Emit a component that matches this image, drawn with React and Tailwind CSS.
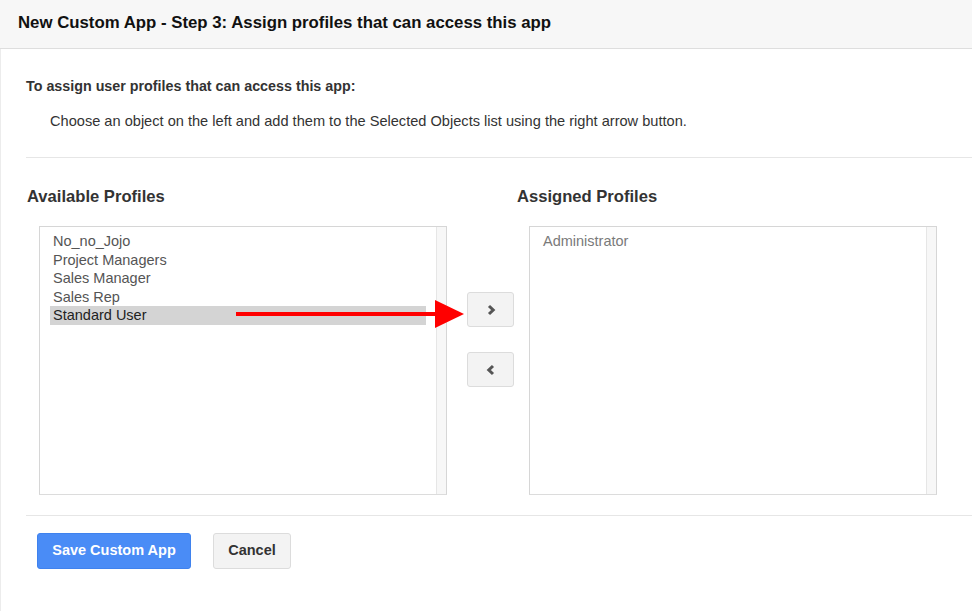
import React from "react";

const available = ["No_no_Jojo", "Project Managers", "Sales Manager", "Sales Rep", "Standard User"];
const assigned = ["Administrator"];

function Chevron({ dir }) {
  return (
    <svg width="10" height="12" viewBox="0 0 10 12">
      {dir === "right" ? (
        <path d="M3 2 L7.2 6 L3 10" fill="none" stroke="#555" strokeWidth="3" strokeLinejoin="miter" />
      ) : (
        <path d="M7 2 L2.8 6 L7 10" fill="none" stroke="#555" strokeWidth="3" strokeLinejoin="miter" />
      )}
    </svg>
  );
}

function ListBox({ items, selected, muted }) {
  return (
    <div className="ml-[12px] flex h-[269px] w-[408px] border border-[#d6d6d6] border-b-[#dcdcdc] bg-white">
      <div className="flex-1 px-[10px] pt-[5px]">
        {items.map((it) => (
          <div
            key={it}
            className={
              "h-[18.5px] pl-[3px] text-[14.5px] leading-[18.5px] " +
              (it === selected ? "bg-[#d4d4d4] text-[#222]" : muted ? "text-[#7a7a7a]" : "text-[#555]")
            }
          >
            {it}
          </div>
        ))}
      </div>
      <div className="w-[10px] border-l border-[#e6e6e6] bg-[#f7f7f7]" />
    </div>
  );
}

export default function App() {
  return (
    <div
      className="relative h-[611px] w-[972px] overflow-hidden bg-white"
      style={{ fontFamily: '"Liberation Sans", Arial, sans-serif' }}
    >
      <div className="flex h-[49px] items-center border-b border-[#dedede] bg-[#f7f7f7] px-[18px] pb-[2px] text-[16.8px] font-bold text-[#111]">
        New Custom App - Step 3: Assign profiles that can access this app
      </div>

      <div className="h-[562px] border-l border-[#ececec]">
        <div className="pl-[25px]">
          <div className="pt-[29px] text-[14.3px] font-bold leading-[16px] text-[#333]">
            To assign user profiles that can access this app:
          </div>
          <div className="mt-[18px] pl-[24px] text-[14.6px] leading-[18px] text-[#333]">
            Choose an object on the left and add them to the Selected Objects list using the right arrow button.
          </div>
          <div className="mt-[27px] border-t border-[#e6e6e6]" />

          <div className="mt-[29px] flex items-start">
            <div className="ml-[1px] w-[420px]">
              <div className="text-[16.6px] font-bold leading-[20px] text-[#333]">Available Profiles</div>
              <div className="mt-[19px]">
                <ListBox items={available} selected="Standard User" />
              </div>
            </div>

            <div className="ml-[20px] flex w-[47px] flex-col gap-[25px] pt-[105px]">
              <button className="flex h-[35px] w-[47px] items-center justify-center rounded-[3px] border border-[#dcdcdc] bg-[#f3f3f3]">
                <Chevron dir="right" />
              </button>
              <button className="flex h-[35px] w-[47px] items-center justify-center rounded-[3px] border border-[#dcdcdc] bg-[#f3f3f3]">
                <Chevron dir="left" />
              </button>
            </div>

            <div className="ml-[3px] w-[420px]">
              <div className="text-[16.6px] font-bold leading-[20px] text-[#333]">Assigned Profiles</div>
              <div className="mt-[19px]">
                <ListBox items={assigned} muted />
              </div>
            </div>
          </div>

          <div className="mt-[20px] border-t border-[#e6e6e6]" />

          <div className="mt-[17px] flex items-center pl-[11px]">
            <button className="h-[36px] w-[154px] rounded-[3px] border border-[#3f82ee] bg-[#4a8cf6] text-[14.5px] font-bold text-white">
              Save Custom App
            </button>
            <button className="ml-[22px] h-[36px] w-[78px] rounded-[3px] border border-[#dcdcdc] bg-[#f3f3f3] text-[14.5px] font-bold text-[#333]">
              Cancel
            </button>
          </div>
        </div>
      </div>

      {/* annotation arrow pointing at the add button */}
      <svg className="pointer-events-none absolute left-0 top-0" width="972" height="611">
        <rect x="236" y="312" width="202" height="4" fill="#ff0000" />
        <polygon points="435,300 464,314 435,328" fill="#ff0000" />
      </svg>
    </div>
  );
}
